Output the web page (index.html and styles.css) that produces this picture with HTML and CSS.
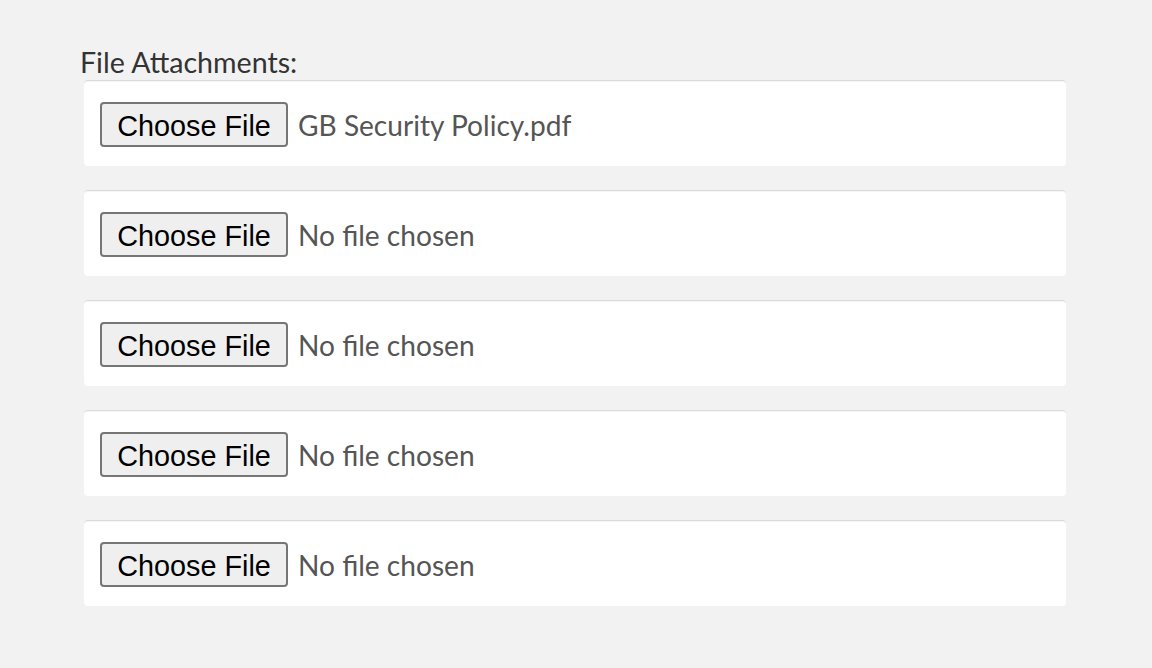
FILE: index.html
```html
<!DOCTYPE html>
<html>
<head>
<meta charset="utf-8">
<link rel="stylesheet" href="styles.css">
</head>
<body>
<div class="page">
  <div class="label">File Attachments:</div>
  <div class="list">
    <div class="row"><span class="btn">Choose File</span><span class="fname">GB Security Policy.pdf</span></div>
    <div class="row"><span class="btn">Choose File</span><span class="fname">No file chosen</span></div>
    <div class="row"><span class="btn">Choose File</span><span class="fname">No file chosen</span></div>
    <div class="row"><span class="btn">Choose File</span><span class="fname">No file chosen</span></div>
    <div class="row"><span class="btn">Choose File</span><span class="fname">No file chosen</span></div>
  </div>
</div>
</body>
</html>
```
FILE: styles.css
```css
html, body {
  margin: 0;
  padding: 0;
  background: #f2f2f2;
}
.page {
  padding: 44px 86px 0 80px;
  font-family: Lato, "Liberation Sans", sans-serif;
}
.label {
  font-size: 28.6px;
  line-height: 36px;
  color: #333;
}
.list {
  margin-left: 4px;
  display: flex;
  flex-direction: column;
  gap: 24px;
}
.row {
  background: #fff;
  border-top: 1px solid #dadada;
  box-shadow: inset 0 1px 1px rgba(0,0,0,0.04);
  border-radius: 4px;
  height: 86px;
  box-sizing: border-box;
  padding: 21px 16px 0 16px;
  display: flex;
  align-items: flex-start;
}
.btn {
  box-sizing: border-box;
  width: 188px;
  height: 45px;
  border: 2px solid #767676;
  border-radius: 4px;
  background: #efefef;
  font-family: "Liberation Sans", Arial, sans-serif;
  font-size: 28.8px;
  color: #000;
  display: flex;
  align-items: center;
  justify-content: center;
  padding-top: 3px;
}
.fname {
  margin-left: 10px;
  font-size: 28.1px;
  line-height: 46px;
  color: #555;
}
```
